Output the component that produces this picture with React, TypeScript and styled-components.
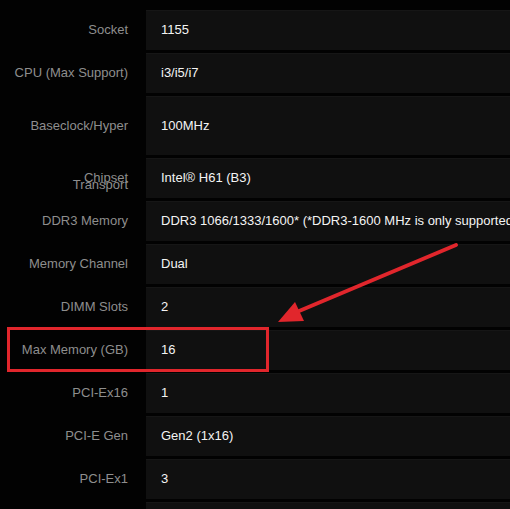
import React from "react";
import styled, { createGlobalStyle } from "styled-components";

const Global = createGlobalStyle`
  html, body { margin: 0; padding: 0; background: #000; }
  body { font-family: "Liberation Sans", Arial, sans-serif; font-size: 13px; }
`;

const Page = styled.div`
  position: relative;
  width: 510px;
  height: 509px;
  overflow: hidden;
  background: #020202;
  padding-top: 10px;
  box-sizing: border-box;
`;

const Table = styled.div`
  display: flex;
  flex-direction: column;
  gap: 3px;
`;

const Row = styled.div<{ $h: number }>`
  display: grid;
  grid-template-columns: 146px 1fr;
  height: ${(p) => p.$h}px;
`;

const Label = styled.div<{ $h: number }>`
  color: #8e8e8e;
  text-align: right;
  padding: 0 18px 0 8px;
  line-height: ${(p) => p.$h}px;
  height: ${(p) => p.$h}px;
  overflow: visible;
  position: relative;
  z-index: 1;
`;

const Value = styled.div<{ $h: number }>`
  background: #101010;
  border-top: 1px solid #161616;
  box-sizing: border-box;
  color: #f4f4f4;
  padding-left: 15px;
  line-height: ${(p) => p.$h - 2}px;
  white-space: nowrap;
  overflow: hidden;
`;

const Overlay = styled.svg`
  position: absolute;
  left: 0;
  top: 0;
  z-index: 2;
  pointer-events: none;
`;

const rows: { label: string; value: string; h?: number }[] = [
  { label: "Socket", value: "1155" },
  { label: "CPU (Max Support)", value: "i3/i5/i7" },
  { label: "Baseclock/Hyper Transport", value: "100MHz", h: 59 },
  { label: "Chipset", value: "Intel® H61 (B3)" },
  { label: "DDR3 Memory", value: "DDR3 1066/1333/1600* (*DDR3-1600 MHz is only supported by 3rd Gen Intel CPUs)" },
  { label: "Memory Channel", value: "Dual" },
  { label: "DIMM Slots", value: "2" },
  { label: "Max Memory (GB)", value: "16" },
  { label: "PCI-Ex16", value: "1" },
  { label: "PCI-E Gen", value: "Gen2 (1x16)" },
  { label: "PCI-Ex1", value: "3" },
  { label: "", value: "" },
];

export default function App() {
  return (
    <>
      <Global />
      <Page>
        <Table>
          {rows.map((r, i) => {
            const h = r.h ?? 40;
            return (
              <Row key={i} $h={h}>
                <Label $h={h}>{r.label}</Label>
                <Value $h={h}>{r.value}</Value>
              </Row>
            );
          })}
        </Table>
        <Overlay width="510" height="509" viewBox="0 0 510 509">
          <rect x="8.5" y="328.5" width="259" height="42" fill="none" stroke="#e1262c" strokeWidth="3" />
          <line x1="456" y1="245" x2="292" y2="314" stroke="#e1262c" strokeWidth="4" strokeLinecap="round" />
          <polygon points="278,322 295,302 304,321" fill="#e1262c" />
        </Overlay>
      </Page>
    </>
  );
}
